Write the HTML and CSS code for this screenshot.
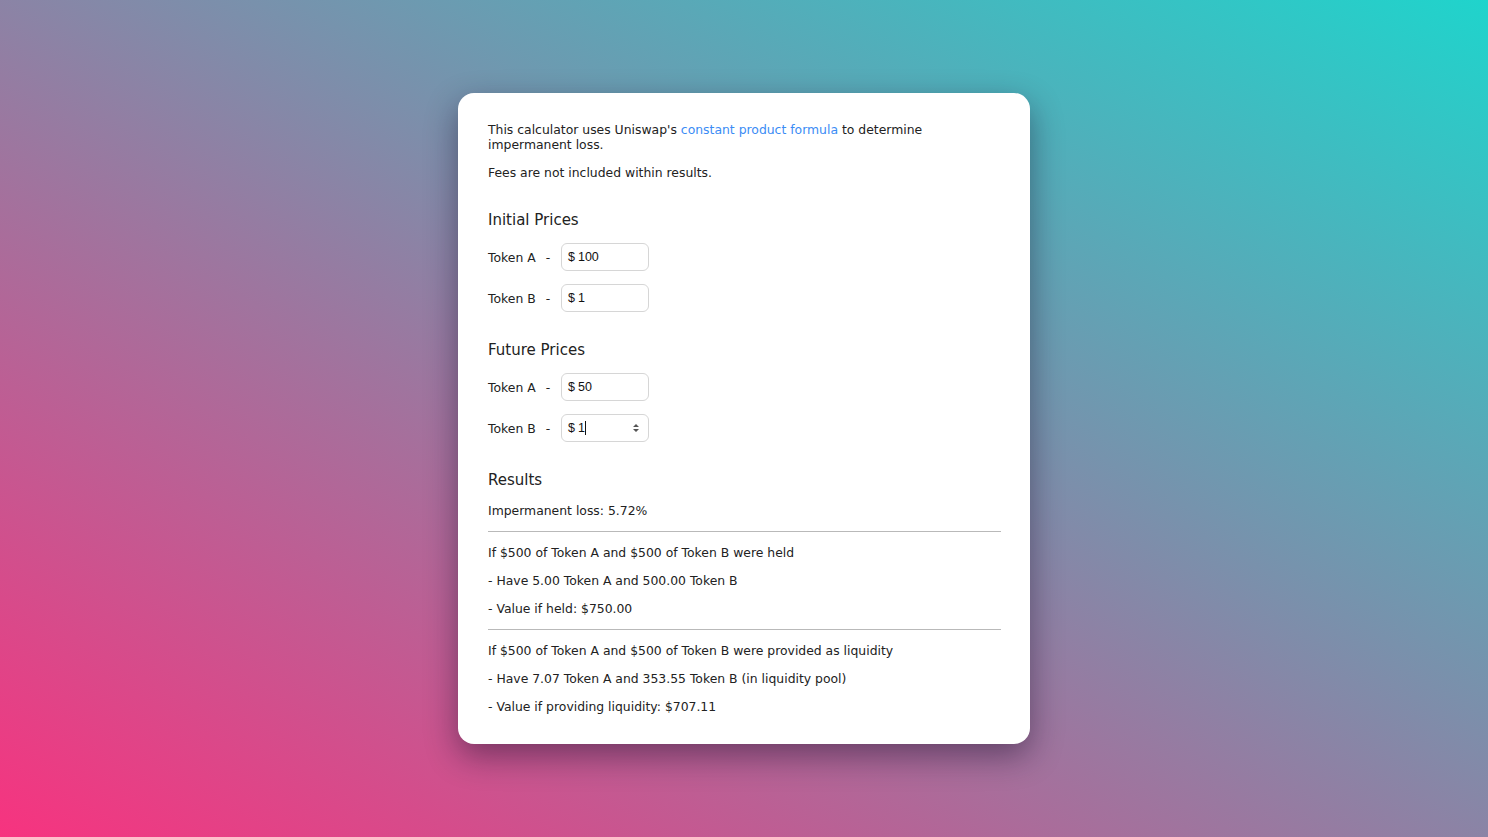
FILE: index.html
```html
<!DOCTYPE html>
<html lang="en">
<head>
  <meta charset="UTF-8" />
  <meta name="viewport" content="width=device-width, initial-scale=1" />
  <title>Impermanent Loss Calculator</title>
  <link rel="stylesheet" href="styles.css">
</head>
<body>
  <div class="card">
    <p class="intro">This calculator uses Uniswap's <a href="#">constant product formula</a> to determine impermanent loss.</p>
    <p class="note">Fees are not included within results.</p>

    <h3>Initial Prices</h3>
    <div class="row">
      <label>Token A<span class="dash">-</span></label>
      <div class="field"><span>$</span><input type="text" value="100" /></div>
    </div>
    <div class="row">
      <label>Token B<span class="dash">-</span></label>
      <div class="field"><span>$</span><input type="text" value="1" /></div>
    </div>

    <h3>Future Prices</h3>
    <div class="row">
      <label>Token A<span class="dash">-</span></label>
      <div class="field"><span>$</span><input type="text" value="50" /></div>
    </div>
    <div class="row">
      <label>Token B<span class="dash">-</span></label>
      <div class="field active"><span>$</span><input type="text" value="1" /><i class="caret"></i>
        <svg class="spin" width="8" height="10" viewBox="0 0 8 10"><path d="M1 4 L4 1 L7 4 Z M1 6 L4 9 L7 6 Z" fill="#555"/></svg>
      </div>
    </div>

    <h3>Results</h3>
    <p>Impermanent loss: 5.72%</p>
    <hr />
    <p>If $500 of Token A and $500 of Token B were held</p>
    <p>- Have 5.00 Token A and 500.00 Token B</p>
    <p>- Value if held: $750.00</p>
    <hr />
    <p>If $500 of Token A and $500 of Token B were provided as liquidity</p>
    <p>- Have 7.07 Token A and 353.55 Token B (in liquidity pool)</p>
    <p>- Value if providing liquidity: $707.11</p>
  </div>
</body>
</html>
```

FILE: styles.css
```css
html, body {
  height: 100%;
}
body {
  margin: 0;
  font-family: 'DejaVu Sans', sans-serif;
  background: linear-gradient(to top right, #f7337f, #1fd4cc);
  color: #222;
  display: flex;
  justify-content: center;
  align-items: flex-start;
}
.card {
  margin-top: 93px;
  width: 513px;
  padding: 29px 29px 17px 30px;
  background: #fff;
  border-radius: 16px;
  box-shadow: 0 12px 32px rgba(20, 10, 40, 0.45);
  font-size: 12.4px;
}
p {
  margin: 0 0 13px;
  line-height: 15px;
}
.note {
  margin-bottom: 31px;
}
a {
  color: #3b8cf5;
  text-decoration: none;
}
h3 {
  font-weight: 400;
  font-size: 15px;
  margin: 0 0 14px;
  line-height: 18px;
}
.row {
  display: flex;
  align-items: center;
  margin-bottom: 13px;
}
.row:last-of-type {
  margin-bottom: 0;
}
.row label {
  width: 73px;
}
.dash {
  margin-left: 10px;
}
.field {
  width: 75px;
  height: 26px;
  border: 1px solid #d6d6d6;
  border-radius: 6px;
  display: flex;
  align-items: center;
  padding: 0 5px 0 6px;
  font-family: 'Liberation Sans', sans-serif;
  font-size: 12.5px;
  color: #111;
}
.field span {
  margin-right: 3px;
}
.field input {
  border: none;
  outline: none;
  padding: 0;
  font: inherit;
  color: inherit;
  width: 40px;
}
.field.active input {
  width: 7px;
}
.caret {
  display: inline-block;
  width: 1px;
  height: 14px;
  background: #111;
}
.spin {
  margin-left: auto;
  margin-right: 3px;
}
.row + h3 {
  margin-top: 29px;
}
hr {
  border: none;
  border-top: 1px solid #b9b9b9;
  margin: 0 0 13px;
}
```
